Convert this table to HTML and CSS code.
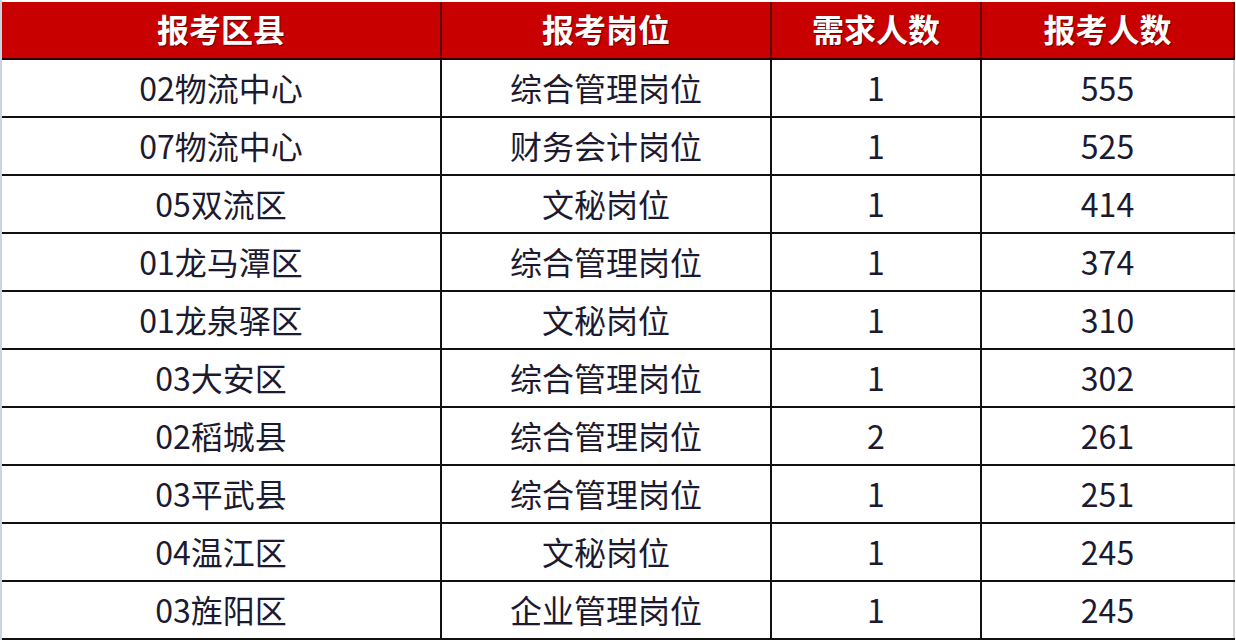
FILE: index.html
```html
<!DOCTYPE html>
<html lang="zh">
<head>
<meta charset="utf-8">
<link rel="stylesheet" href="styles.css">
</head>
<body>
<div class="wrap">
<table class="grid">
<colgroup><col class="c1"><col class="c2"><col class="c3"><col class="c4"></colgroup>
<thead>
<tr><th>报考区县</th><th>报考岗位</th><th>需求人数</th><th>报考人数</th></tr>
</thead>
<tbody>
<tr><td>02物流中心</td><td>综合管理岗位</td><td>1</td><td>555</td></tr>
<tr><td>07物流中心</td><td>财务会计岗位</td><td>1</td><td>525</td></tr>
<tr><td>05双流区</td><td>文秘岗位</td><td>1</td><td>414</td></tr>
<tr><td>01龙马潭区</td><td>综合管理岗位</td><td>1</td><td>374</td></tr>
<tr><td>01龙泉驿区</td><td>文秘岗位</td><td>1</td><td>310</td></tr>
<tr><td>03大安区</td><td>综合管理岗位</td><td>1</td><td>302</td></tr>
<tr><td>02稻城县</td><td>综合管理岗位</td><td>2</td><td>261</td></tr>
<tr><td>03平武县</td><td>综合管理岗位</td><td>1</td><td>251</td></tr>
<tr><td>04温江区</td><td>文秘岗位</td><td>1</td><td>245</td></tr>
<tr><td>03旌阳区</td><td>企业管理岗位</td><td>1</td><td>245</td></tr>
</tbody>
</table>
</div>
</body>
</html>
```
FILE: styles.css
```css
html, body {
  margin: 0;
  padding: 0;
  background: #ffffff;
}
.wrap {
  width: 1236px;
  height: 640px;
  overflow: hidden;
  border-left: 2px solid #c9d6dc;
  box-sizing: border-box;
  padding-top: 2px;
}
.grid {
  border-collapse: collapse;
  table-layout: fixed;
  width: 1232px;
  font-family: "Noto Sans CJK SC", "Noto Sans", sans-serif;
}
.c1 { width: 439px; }
.c2 { width: 330px; }
.c3 { width: 210px; }
.c4 { width: 253px; }
.grid th {
  background: #c80000;
  color: #ffffff;
  font-weight: 700;
  font-size: 32px;
  height: 51px;
  padding: 0 0 5px 0;
  text-align: center;
  border-left: 2px solid #5a0000;
  border-right: 2px solid #5a0000;
  border-bottom: 2px solid #2a0000;
  text-shadow: 1px 1px 1px rgba(60, 0, 0, 0.7);
  line-height: 1;
}
.grid th:first-child { border-left: none; }
.grid td {
  height: 53px;
  padding: 0 0 3px 0;
  text-align: center;
  font-size: 32px;
  color: #1c1a30;
  border: 2px solid #111111;
  line-height: 1;
}
.grid td:first-child { border-left: none; }
.grid td:last-child { border-right: 2px solid #d6d6d6; }
```
